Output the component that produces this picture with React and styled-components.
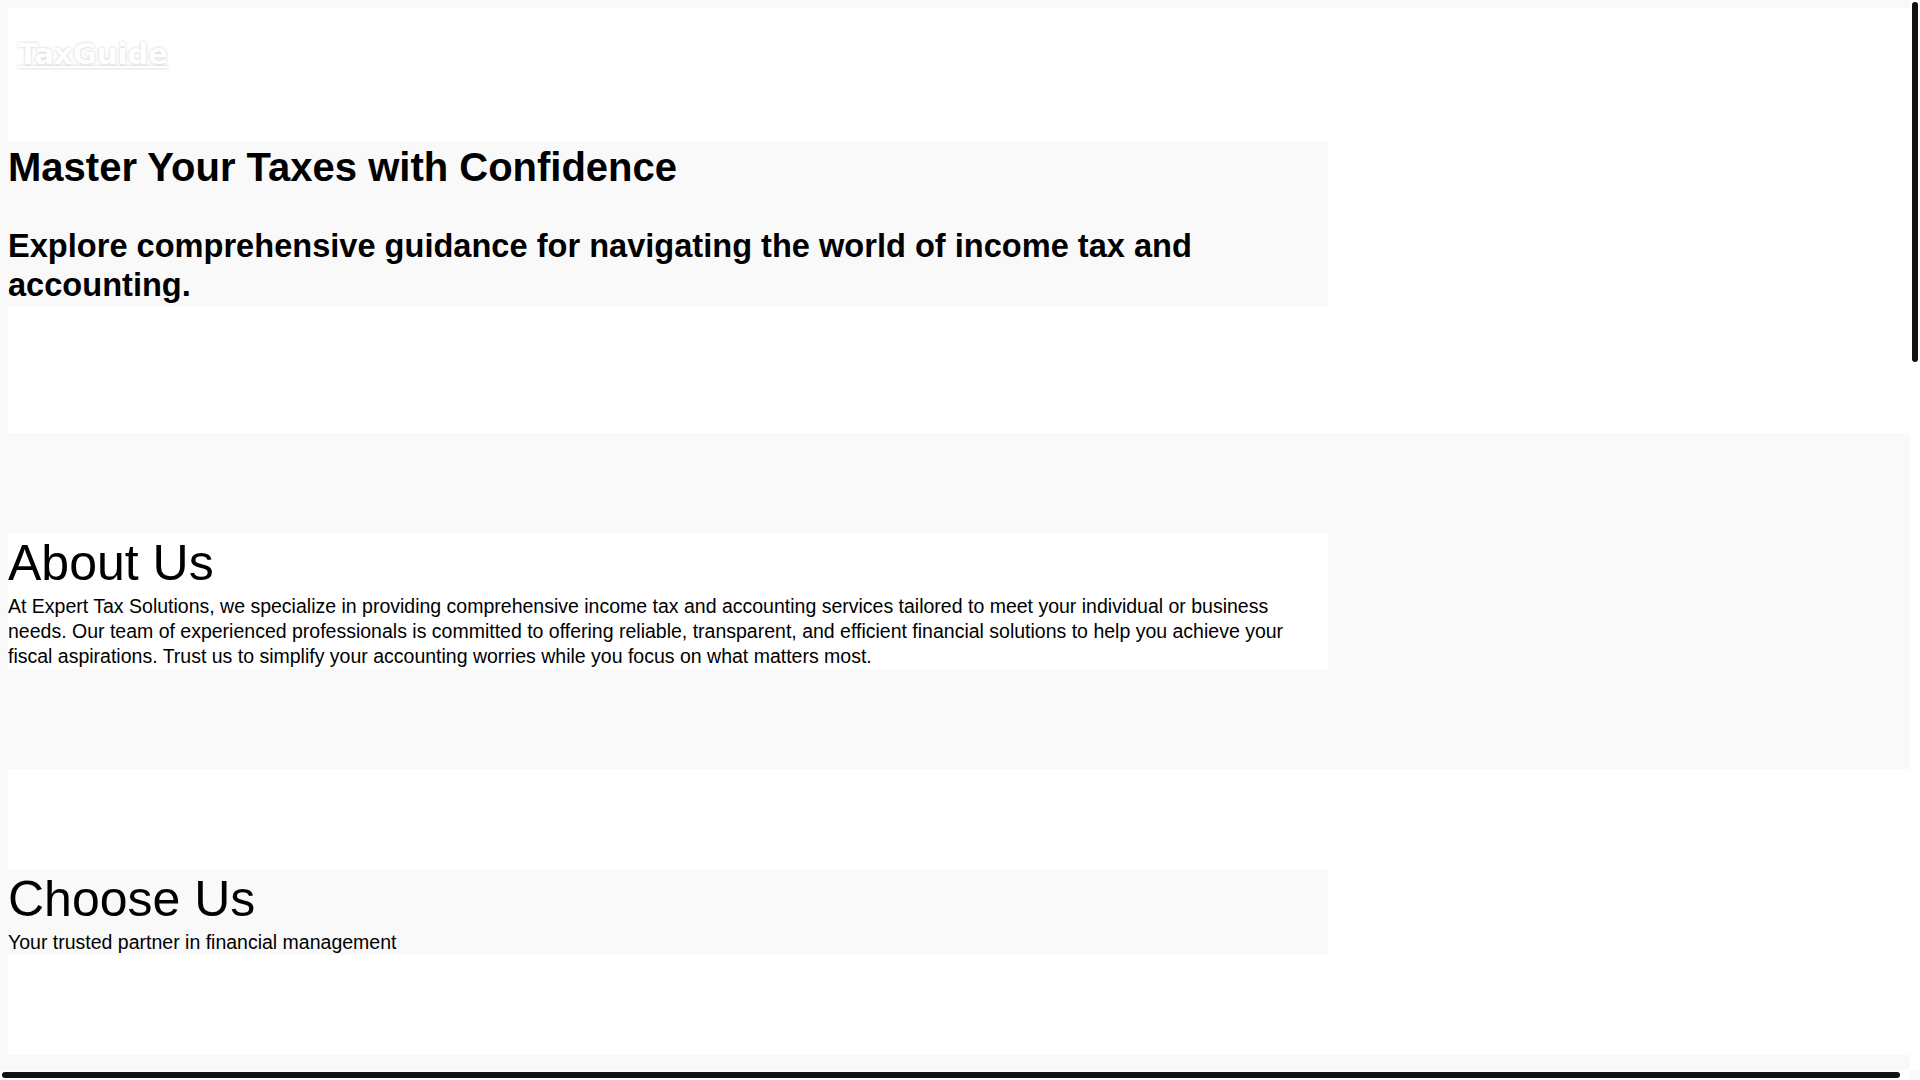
import React from "react";
import styled, { createGlobalStyle } from "styled-components";

const GlobalStyle = createGlobalStyle`
  html, body {
    margin: 0;
    height: 100%;
    overflow: hidden;
    background: #f9f9f9;
  }
  body {
    color: #000;
    font-family: "Liberation Sans", Arial, sans-serif;
    line-height: 1.3;
  }
`;

/* Window frame: scrollable page area plus its scrollbars */
const Frame = styled.div`
  display: grid;
  grid-template-columns: 1fr 10px;
  grid-template-rows: 1fr 10px;
  width: 100vw;
  height: 100vh;
`;

const Viewport = styled.div`
  overflow: auto;
  scrollbar-width: none;
  background: #f9f9f9;
  &::-webkit-scrollbar { display: none; }
`;

const Track = styled.div`
  display: flex;
  flex-direction: ${(p) => (p.$vertical ? "column" : "row")};
  background: #fff;
  padding: 2px;
`;

const Thumb = styled.div`
  flex: none;
  background: #111;
  border-radius: 3px;
  ${(p) => (p.$vertical ? "width: 6px; height: 360px;" : "height: 6px; width: 1898px;")}
`;

const Corner = styled.div`
  background: #f9f9f9;
`;

const Page = styled.div`
  width: 1910px;
  margin: 8px 0 8px 8px;
`;

const Header = styled.header`
  background: #fff;
  padding: 30px 10px 70px;
`;

const Logo = styled.a`
  font-family: "DejaVu Sans", Verdana, sans-serif;
  font-weight: bold;
  font-size: 29.2px;
  line-height: 33px;
  color: #fff;
  text-decoration: underline;
  text-shadow: 0 0 3px rgba(0, 0, 0, 0.22);
`;

const Section = styled.section`
  background: ${(p) => (p.$tone === "gray" ? "#f9f9f9" : "#fff")};
  padding: ${(p) => p.$pad || "100px 0"};
`;

const Container = styled.div`
  max-width: 1320px;
  background: ${(p) => (p.$tone === "gray" ? "#f9f9f9" : "#fff")};
`;

const HeroTitle = styled.h1`
  margin: 0;
  font-size: 40px;
  font-weight: bold;
  line-height: 52px;
`;

const HeroLead = styled.h2`
  margin: 33px 0 0;
  padding-bottom: 3px;
  font-size: 32.6px;
  font-weight: bold;
  line-height: 39px;
`;

const SectionTitle = styled.h2`
  margin: 0;
  font-size: 50px;
  font-weight: normal;
  line-height: 61px;
`;

const Text = styled.p`
  margin: 0;
  font-size: 19.5px;
  line-height: 25px;
`;

const Rest = styled.div`
  height: 2077px;
  background: #f9f9f9;
`;

export default function App() {
  return (
    <>
      <GlobalStyle />
      <Frame>
        <Viewport>
          <Page>
            <Header>
              <Logo href="#">TaxGuide</Logo>
            </Header>
            <Section $tone="white" $pad="0 0 126px">
              <Container $tone="gray">
                <HeroTitle>Master Your Taxes with Confidence</HeroTitle>
                <HeroLead>
                  Explore comprehensive guidance for navigating the world of income tax and
                  accounting.
                </HeroLead>
              </Container>
            </Section>
            <Section $tone="gray">
              <Container $tone="white">
                <SectionTitle>About Us</SectionTitle>
                <Text>
                  At Expert Tax Solutions, we specialize in providing comprehensive income tax and
                  accounting services tailored to meet your individual or business needs. Our team
                  of experienced professionals is committed to offering reliable, transparent, and
                  efficient financial solutions to help you achieve your fiscal aspirations. Trust
                  us to simplify your accounting worries while you focus on what matters most.
                </Text>
              </Container>
            </Section>
            <Section $tone="white">
              <Container $tone="gray">
                <SectionTitle>Choose Us</SectionTitle>
                <Text>Your trusted partner in financial management</Text>
              </Container>
            </Section>
            <Rest />
          </Page>
        </Viewport>
        <Track $vertical aria-hidden="true">
          <Thumb $vertical />
        </Track>
        <Track aria-hidden="true">
          <Thumb />
        </Track>
        <Corner />
      </Frame>
    </>
  );
}
